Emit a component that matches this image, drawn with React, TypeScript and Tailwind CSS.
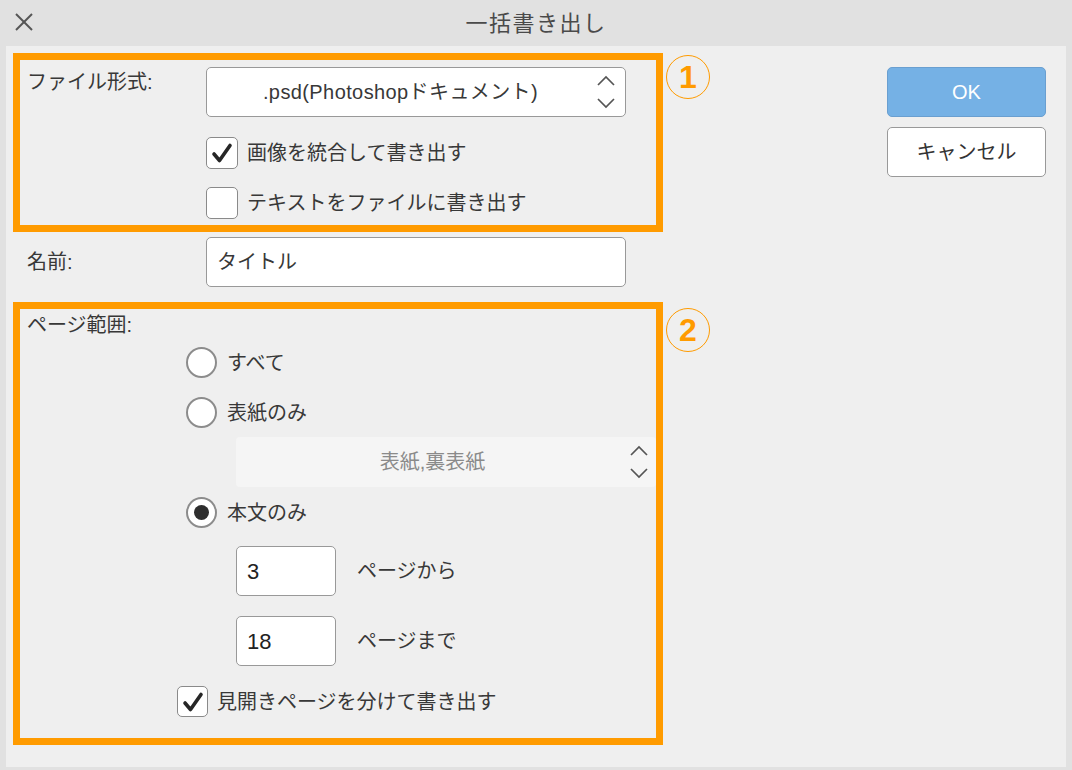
import React from 'react'

const font = "font-['Liberation_Sans','Noto_Sans_CJK_JP',sans-serif]"

function Chevrons() {
  return (
    <svg width="20" height="34" viewBox="0 0 20 34" fill="none" stroke="#555" strokeWidth="1.7">
      <polyline points="2,10 10,2 18,10" />
      <polyline points="2,24 10,32 18,24" />
    </svg>
  )
}

function Checkbox({ checked, size = 32 }: { checked?: boolean; size?: number }) {
  return (
    <div
      className="shrink-0 rounded-[5px] border border-[#8a8a8a] bg-white flex items-center justify-center"
      style={{ width: size, height: size }}
    >
      {checked && (
        <svg width="24" height="24" viewBox="0 0 24 24" fill="none" stroke="#262626" strokeWidth="3.6" strokeLinecap="round" strokeLinejoin="round">
          <polyline points="4,13 9.5,19.5 20,4.5" />
        </svg>
      )}
    </div>
  )
}

function Radio({ selected }: { selected?: boolean }) {
  return (
    <div className="w-[31px] h-[31px] shrink-0 rounded-full border-2 border-[#8c8c8c] bg-white flex items-center justify-center">
      {selected && <div className="w-[15px] h-[15px] rounded-full bg-[#2e2e2e]" />}
    </div>
  )
}

function Marker({ n }: { n: string }) {
  return (
    <div className="w-[44px] h-[44px] rounded-full border-[1.5px] border-[#ff9b00] flex items-center justify-center text-[#ff9b00] text-[32px] font-bold leading-none font-['Liberation_Sans',sans-serif]">
      {n}
    </div>
  )
}

export default function App() {
  return (
    <div className={`w-[1072px] h-[770px] bg-[#e1e1e1] text-[#383838] text-[20px] ${font}`}>
      {/* Title bar */}
      <header className="relative h-[46px] flex items-center justify-center">
        <svg className="absolute left-[15px] top-[13px]" width="18" height="18" viewBox="0 0 18 18" stroke="#555" strokeWidth="2">
          <line x1="1" y1="1" x2="17" y2="17" />
          <line x1="17" y1="1" x2="1" y2="17" />
        </svg>
        <h1 className="text-[22px] tracking-[1.5px] text-[#4a4a4a] font-normal">一括書き出し</h1>
      </header>

      <main className="mx-[6px] h-[721px] bg-[#efefef] flex pl-[7px] pt-[7px]">
        <div className="flex flex-col">
          {/* Box 1 */}
          <div className="flex items-start">
            <div className="w-[650px] h-[179px] border-[7px] border-[#ff9b00] flex flex-col">
              <div className="flex items-start mt-[7px]">
                <div className="w-[186px] pl-[7px] pt-[1px] leading-[28px]">ファイル形式:</div>
                <div className="w-[420px] h-[50px] rounded-[5px] border border-[#999] bg-white flex items-center">
                  <div className="flex-1 text-center pl-[2px] leading-[28px] tracking-[0.4px]">.psd(Photoshopドキュメント)</div>
                  <div className="pr-[9px] pl-[4px] flex items-center"><Chevrons /></div>
                </div>
              </div>
              <div className="flex items-center gap-[9px] ml-[186px] mt-[20px] h-[32px]">
                <Checkbox checked />
                <span>画像を統合して書き出す</span>
              </div>
              <div className="flex items-center gap-[9px] ml-[186px] mt-[18px] h-[32px]">
                <Checkbox />
                <span>テキストをファイルに書き出す</span>
              </div>
            </div>
            <div className="ml-[3px] mt-[2px]"><Marker n="1" /></div>
          </div>

          {/* Name */}
          <div className="flex items-center mt-[5px] h-[50px]">
            <div className="w-[193px] pl-[14px]">名前:</div>
            <div className="w-[420px] h-[50px] rounded-[5px] border border-[#999] bg-white flex items-center pl-[10px]">タイトル</div>
          </div>

          {/* Box 2 */}
          <div className="flex items-start mt-[15px]">
            <div className="w-[650px] h-[443px] border-[7px] border-[#ff9b00] flex flex-col">
              <div className="pl-[7px] pt-[2px] leading-[28px]">ページ範囲:</div>
              <div className="flex items-center gap-[10px] ml-[166px] mt-[8px]">
                <Radio />
                <span>すべて</span>
              </div>
              <div className="flex items-center gap-[10px] ml-[166px] mt-[19px]">
                <Radio />
                <span>表紙のみ</span>
              </div>
              <div className="ml-[216px] mt-[9px] w-[420px] h-[50px] rounded-[4px] bg-[#f5f5f5] flex items-center text-[#8a8a8a]">
                <div className="flex-1 text-center pl-[4px]">表紙,裏表紙</div>
                <div className="pr-[7px] pl-[4px] flex items-center"><Chevrons /></div>
              </div>
              <div className="flex items-center gap-[10px] ml-[166px] mt-[10px]">
                <Radio selected />
                <span>本文のみ</span>
              </div>
              <div className="flex items-center ml-[216px] mt-[18px]">
                <div className="w-[100px] h-[50px] rounded-[5px] border border-[#999] bg-white flex items-center pl-[10px] text-[#222] text-[22px]">3</div>
                <span className="ml-[21px]">ページから</span>
              </div>
              <div className="flex items-center ml-[216px] mt-[20px]">
                <div className="w-[100px] h-[50px] rounded-[5px] border border-[#999] bg-white flex items-center pl-[10px] text-[#222] text-[22px]">18</div>
                <span className="ml-[21px]">ページまで</span>
              </div>
              <div className="flex items-center gap-[9px] ml-[157px] mt-[20px]">
                <Checkbox checked size={31} />
                <span>見開きページを分けて書き出す</span>
              </div>
            </div>
            <div className="ml-[3px] mt-[6px]"><Marker n="2" /></div>
          </div>
        </div>

        {/* Buttons */}
        <div className="ml-auto mr-[20px] mt-[14px] flex flex-col gap-[10px]">
          <button className="w-[159px] h-[50px] rounded-[5px] border border-[#6a9fd0] bg-[#75b1e5] text-white text-[20px]">OK</button>
          <button className="w-[159px] h-[50px] rounded-[5px] border border-[#999] bg-white text-[#333] text-[20px]">キャンセル</button>
        </div>
      </main>
    </div>
  )
}
